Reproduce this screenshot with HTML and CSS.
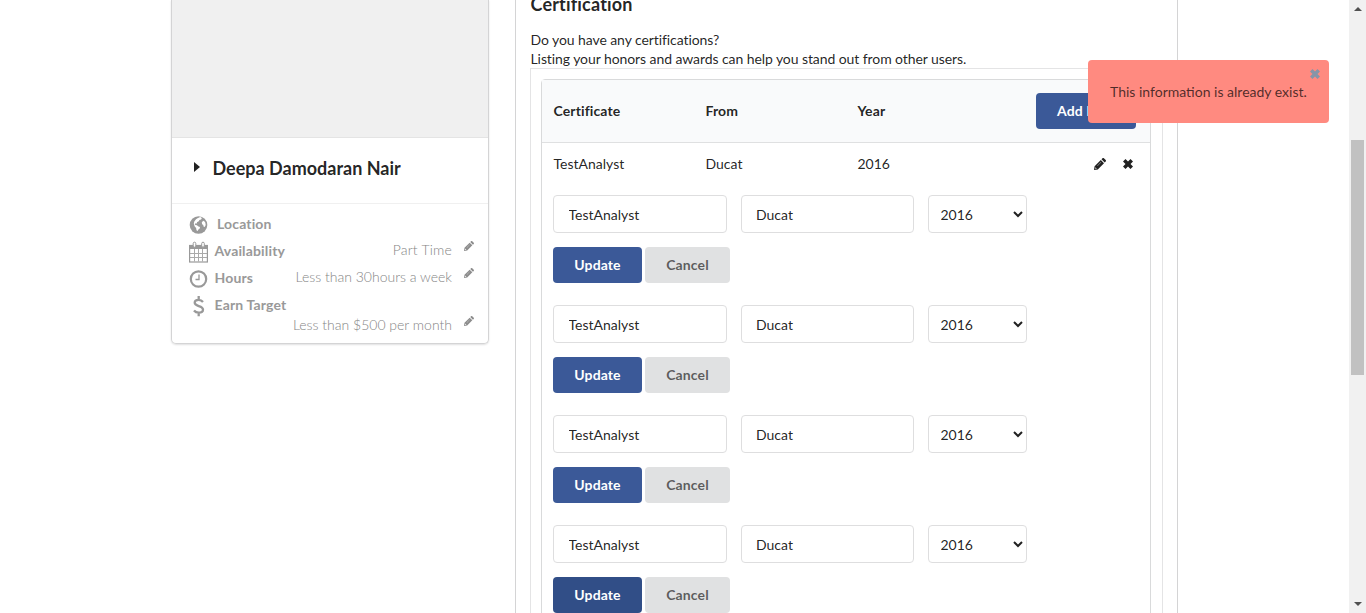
FILE: index.html
```html
<!DOCTYPE html>
<html lang="en">
<head>
<meta charset="utf-8">
<title>Profile</title>
<link rel="stylesheet" href="styles.css">
</head>
<body>
<svg class="sprite" aria-hidden="true">
  <symbol id="pencil" viewBox="0 0 12 12"><path fill="currentColor" fill-rule="evenodd" d="M0 12l.6-3.800L6.800 2l3.200 3.200-6.200 6.200zM7.500 1.300l1-1c.4-.4 1-.4 1.400 0l1.800 1.800c.4.4.4 1 0 1.400l-1 1zM1.500 9.400l-.3 1 .4.400 1-.3v-.5h-.6v-.6zM3.300 7.800l.2.2L7.200 4.300l-.2-.2z"/></symbol>
  <symbol id="cross" viewBox="0 0 10 10"><path fill="currentColor" d="M2.500 0L5 2.500 7.500 0 10 2.500 7.500 5 10 7.500 7.500 10 5 7.500 2.500 10 0 7.500 2.500 5 0 2.500z"/></symbol>
</svg>
<div class="window">
  <div class="page">
    <aside class="card">
      <div class="photo"></div>
      <div class="name"><span class="caret"></span><span>Deepa Damodaran Nair</span></div>
      <div class="details">
        <div class="detail location">
          <svg class="icon" viewBox="0 0 20 22"><circle cx="9.500" cy="11" r="8.800" fill="#999"/><path fill="#fff" d="M8.500 4.200l2.700-1.300 1.700 1-.8 1.500-1.700.5-.6 1.300-1.900 1 .2 1.300-1.500-.3-.8 1 .6.9 1.500.2 1.600 1.200 1.500.4-.3 1.700-1.500 1.200-.4 1.200-1.300-.7-.4-2.200-1.500-1.900-.8-2.600.5-2.200 1.700-2.200zM12.800 8l2-1.200 1.500 1.800.4 2.300-1 2-1.200-.4-.2-1.500-1.200-.7z"/></svg>
          <b>Location</b>
        </div>
        <div class="detail">
          <svg class="icon" viewBox="0 0 20 22"><rect x=".6" y="4.500" width="17.800" height="16.500" fill="none" stroke="#999" stroke-width="1.200"/><path fill="#999" d="M.5 4h18v4H.5z"/><path stroke="#aaa" d="M5.500 8v12.500M9.500 8v12.500M13.500 8v12.500M1 12.500h17M1 16.500h17" fill="none"/><rect x="4.200" y="1.200" width="2.600" height="5" rx="1.300" fill="#fff" stroke="#999"/><rect x="12.700" y="1.200" width="2.600" height="5" rx="1.300" fill="#fff" stroke="#999"/></svg>
          <b>Availability</b><span class="value short">Part Time</span><svg class="edit"><use href="#pencil"/></svg>
        </div>
        <div class="detail">
          <svg class="icon" viewBox="0 0 20 22"><circle cx="9.500" cy="11" r="7.700" fill="none" stroke="#999" stroke-width="2.200"/><path d="M10 6.500v5H6.500" fill="none" stroke="#999" stroke-width="1.300"/></svg>
          <b>Hours</b><span class="value">Less than 30hours a week</span><svg class="edit"><use href="#pencil"/></svg>
        </div>
        <div class="detail">
          <svg class="icon" viewBox="0 0 20 22"><path d="M14 6.900C12.700 5.300 11.400 4.800 9.700 4.800c-2.500 0-4 1.200-4 3 0 4 8.300 2.500 8.300 6.700 0 2-1.700 3.200-4.300 3.200-2 0-3.500-.7-4.700-2.200M9.700 1v4M9.700 17.500v3.700" fill="none" stroke="#999" stroke-width="2.300"/></svg>
          <b>Earn Target</b>
        </div>
        <div class="detail target"><span class="value">Less than $500 per month</span><svg class="edit"><use href="#pencil"/></svg></div>
      </div>
    </aside>

    <main class="panel">
      <h3>Certification</h3>
      <p class="intro">Do you have any certifications?<br>Listing your honors and awards can help you stand out from other users.</p>
      <div class="segment">
        <div class="table">
          <div class="row head"><span>Certificate</span><span>From</span><span>Year</span><button class="btn primary add">Add New</button></div>
          <div class="row"><span>TestAnalyst</span><span>Ducat</span><span>2016</span><div class="actions"><svg class="pen"><use href="#pencil"/></svg><svg class="remove"><use href="#cross"/></svg></div></div>
          <form class="editor">
            <div class="fields"><input type="text" value="TestAnalyst"><input type="text" value="Ducat"><select><option>2016</option></select></div>
            <div class="buttons"><button type="button" class="btn primary update">Update</button><button type="button" class="btn cancel">Cancel</button></div>
          </form>
          <form class="editor">
            <div class="fields"><input type="text" value="TestAnalyst"><input type="text" value="Ducat"><select><option>2016</option></select></div>
            <div class="buttons"><button type="button" class="btn primary update">Update</button><button type="button" class="btn cancel">Cancel</button></div>
          </form>
          <form class="editor">
            <div class="fields"><input type="text" value="TestAnalyst"><input type="text" value="Ducat"><select><option>2016</option></select></div>
            <div class="buttons"><button type="button" class="btn primary update">Update</button><button type="button" class="btn cancel">Cancel</button></div>
          </form>
          <form class="editor">
            <div class="fields"><input type="text" value="TestAnalyst"><input type="text" value="Ducat"><select><option>2016</option></select></div>
            <div class="buttons"><button type="button" class="btn primary update active">Update</button><button type="button" class="btn cancel">Cancel</button></div>
          </form>
        </div>
      </div>
    </main>
  </div>
  <div class="scrollbar"><i class="up"></i><div class="thumb"></div><i class="down"></i></div>
  <div class="toast">This information is already exist.<svg class="close"><use href="#cross"/></svg></div>
</div>
</body>
</html>
```
FILE: styles.css
```css
* { box-sizing: border-box; }
body { margin: 0; background: #fff; color: rgba(0, 0, 0, .87); font: 14px/19px Lato, "Liberation Sans", sans-serif; }
.sprite { display: none; }
.window { position: relative; display: flex; height: 613px; overflow: hidden; }
.page { flex: 1; display: flex; align-items: flex-start; gap: 26px; padding-left: 171px; }

.card { width: 318px; border: 1px solid #d4d4d5; border-top: 0; border-radius: 0 0 5px 5px; box-shadow: 0 1px 2px #e0e0e1; }
.photo { height: 138px; background: #f0f0f0; border-bottom: 1px solid #e4e4e4; }
.name { display: flex; align-items: center; gap: 12.500px; height: 65px; padding: 0 0 5px 22px; font-size: 18px; font-weight: 700; }
.caret { width: 6px; margin-top: -2px; border: 5px solid transparent; border-left: 6px solid #222; border-right: 0; }
.details { height: 140px; border-top: 1px solid #f0f0f0; padding: 8px 14px 0 16px; color: #999; }
.detail { display: flex; height: 27px; padding-top: 2px; }
.icon { width: 20px; height: 22px; margin: 0 6px 0 1px; flex: none; }
.detail b { margin-left: -.5px; letter-spacing: .15px; }
.detail.location b { margin-left: 2px; }
.value { margin: -1px 0 0 auto; font-weight: 300; color: #858585; }
.value.short { letter-spacing: .2px; }
.edit { width: 10px; height: 10px; margin: 0 0 0 12px; color: #8c8c8c; }
.detail.target { height: 20px; padding: 0; margin-top: -4px; }

.panel { width: 663px; height: 700px; border: solid #d4d4d5; border-width: 0 1px; padding: 0 14px; }
h3 { margin: 0 0 17px; padding-left: .5px; height: 14px; line-height: 9px; font-size: 18px; font-weight: 700; letter-spacing: .18px; }
.intro { margin: -1px 0 0; padding-left: .5px; height: 38px; line-height: 19px; letter-spacing: -.08px; }
.segment { height: 640px; border: 1px solid #e4e4e5; padding: 10px 11px 10px 10px; }
.table { height: 620px; border: 1px solid #d9dadb; border-radius: 4px; }
.row { display: flex; align-items: center; height: 43px; padding: 0 14px 0 11.500px; }
.row > span { width: 152px; margin-top: -2px; }
.row.head { height: 63px; border-bottom: 1px solid #dfe0e1; background: #f9fafb; font-weight: 700; letter-spacing: .12px; }
.btn { height: 36px; padding: 0; border: 0; border-radius: 4px; background: #e0e1e2; color: rgba(0, 0, 0, .6); font: 700 14px/36px Lato, sans-serif; letter-spacing: .12px; }
.btn.primary { background: #3b5998; color: #fff; }
.btn.active { background: #314e87; }
.btn.add { width: 100px; padding: 0 21px; margin-left: auto; white-space: nowrap; }
.update { width: 89px; }
.cancel { width: 85px; }
.actions { display: flex; align-items: center; gap: 17px; margin: -1px 3px 0 auto; }
.pen { width: 12px; height: 12px; }
.remove { width: 10px; height: 10px; margin-right: .5px; }
.editor { height: 110px; padding: 9px 11px 0; }
.fields { display: flex; gap: 14px; }
.fields input, .fields select { height: 38px; border: 1px solid #dededf; border-radius: 4px; background: #fff; color: rgba(0, 0, 0, .87); font: 14px Lato, sans-serif; }
.fields input { width: 173.500px; padding: 1px 15px 0 14.500px; }
.fields select { width: 99px; padding: 1px 1px 0 7.500px; }
.buttons { display: flex; gap: 3px; margin-top: 14px; }

.scrollbar { width: 17px; height: 613px; background: #f1f1f1; display: flex; flex-direction: column; align-items: center; justify-content: space-between; padding: 7px 0; }
.scrollbar i { border: 4px solid transparent; width: 0; height: 0; }
.scrollbar .up { border-bottom-color: #505050; border-top: 0; }
.scrollbar .down { border-top-color: #505050; border-bottom: 0; }
.thumb { width: 13px; height: 235px; background: #c1c1c1; margin: 129px 0 auto; }

.toast { position: absolute; left: 1088px; top: 60px; width: 241px; height: 63px; padding: 22px 0 0 22px; border-radius: 4px; background: #ff8a80; color: rgba(0, 0, 0, .7); white-space: nowrap; }
.toast .close { position: absolute; right: 9px; top: 9px; width: 10px; height: 10px; color: #8795a8; }
```
